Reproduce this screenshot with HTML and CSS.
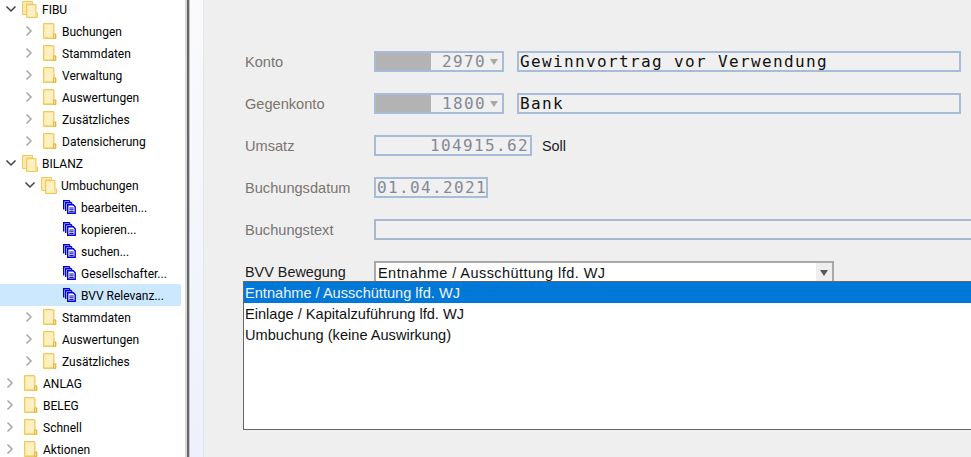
FILE: index.html
```html
<!DOCTYPE html>
<html lang="de">
<head>
<meta charset="utf-8">
<title>BVV Relevanz</title>
<link rel="stylesheet" href="styles.css">
</head>
<body>
<svg class="defs" width="0" height="0" aria-hidden="true">
  <symbol id="closed" viewBox="0 0 14 16">
    <path d="M.5.500h10l.5 .5v10h2v4.500h-12.500z" fill="#fbd978" stroke="#efca62"/>
    <path d="M1.500 1.500h8.500v12.500h-8.500z" fill="#fff0c2"/>
    <path d="M10.500 11h2v4.500h-2z" fill="#fde28e" stroke="#e3b745"/>
  </symbol>
  <symbol id="open" viewBox="0 0 16 17">
    <path d="M.5.5h10v2.500h-6v10.500h-4z" fill="#fde9a8" stroke="#efca62"/>
    <path d="M4.500 3.500h9.500v8.500h1.500v4.500h-11z" fill="#fde28e" stroke="#efca62"/>
    <path d="M5.500 4.500h7.500v11h-7.500z" fill="#fff0c2"/>
  </symbol>
  <symbol id="doc" viewBox="0 0 13 14">
    <path d="M.7 9.500v-8.800h5.500l1 1" fill="none" stroke="#0000e0" stroke-width="1.400"/>
    <path d="M2.700 11v-8.300h5.500l1 1" fill="#fff" stroke="#0000e0" stroke-width="1.400"/>
    <path d="M4.700 4.700h5.500l2 2v6.600h-7.500z" fill="#fff" stroke="#0000e0" stroke-width="1.400"/>
    <path d="M6.300 8h4.400M6.300 9.800h4.400M6.300 11.600h4.400" stroke="#0000a8"/>
  </symbol>
  <symbol id="right" viewBox="0 0 8 12"><path d="M1.500 1.500l4.500 4.500-4.500 4.500" fill="none" stroke="#a6a6a6" stroke-width="1.500"/></symbol>
  <symbol id="down" viewBox="0 0 12 8"><path d="M1.500 1.500l4.500 4.500 4.500-4.500" fill="none" stroke="#404040" stroke-width="1.500"/></symbol>
</svg>

<div class="app">
  <nav class="tree">
    <div class="row l0"><svg class="chev-d"><use href="#down"/></svg><svg class="fold-o"><use href="#open"/></svg><span>FIBU</span></div>
    <div class="row l1"><svg class="chev-r"><use href="#right"/></svg><svg class="fold-c"><use href="#closed"/></svg><span>Buchungen</span></div>
    <div class="row l1"><svg class="chev-r"><use href="#right"/></svg><svg class="fold-c"><use href="#closed"/></svg><span>Stammdaten</span></div>
    <div class="row l1"><svg class="chev-r"><use href="#right"/></svg><svg class="fold-c"><use href="#closed"/></svg><span>Verwaltung</span></div>
    <div class="row l1"><svg class="chev-r"><use href="#right"/></svg><svg class="fold-c"><use href="#closed"/></svg><span>Auswertungen</span></div>
    <div class="row l1"><svg class="chev-r"><use href="#right"/></svg><svg class="fold-c"><use href="#closed"/></svg><span>Zusätzliches</span></div>
    <div class="row l1"><svg class="chev-r"><use href="#right"/></svg><svg class="fold-c"><use href="#closed"/></svg><span>Datensicherung</span></div>
    <div class="row l0"><svg class="chev-d"><use href="#down"/></svg><svg class="fold-o"><use href="#open"/></svg><span>BILANZ</span></div>
    <div class="row l1"><svg class="chev-d"><use href="#down"/></svg><svg class="fold-o"><use href="#open"/></svg><span>Umbuchungen</span></div>
    <div class="row l2"><svg class="doc"><use href="#doc"/></svg><span>bearbeiten...</span></div>
    <div class="row l2"><svg class="doc"><use href="#doc"/></svg><span>kopieren...</span></div>
    <div class="row l2"><svg class="doc"><use href="#doc"/></svg><span>suchen...</span></div>
    <div class="row l2"><svg class="doc"><use href="#doc"/></svg><span>Gesellschafter...</span></div>
    <div class="row l2 selected"><svg class="doc"><use href="#doc"/></svg><span>BVV Relevanz...</span></div>
    <div class="row l1"><svg class="chev-r"><use href="#right"/></svg><svg class="fold-c"><use href="#closed"/></svg><span>Stammdaten</span></div>
    <div class="row l1"><svg class="chev-r"><use href="#right"/></svg><svg class="fold-c"><use href="#closed"/></svg><span>Auswertungen</span></div>
    <div class="row l1"><svg class="chev-r"><use href="#right"/></svg><svg class="fold-c"><use href="#closed"/></svg><span>Zusätzliches</span></div>
    <div class="row l0"><svg class="chev-r"><use href="#right"/></svg><svg class="fold-c"><use href="#closed"/></svg><span>ANLAG</span></div>
    <div class="row l0"><svg class="chev-r"><use href="#right"/></svg><svg class="fold-c"><use href="#closed"/></svg><span>BELEG</span></div>
    <div class="row l0"><svg class="chev-r"><use href="#right"/></svg><svg class="fold-c"><use href="#closed"/></svg><span>Schnell</span></div>
    <div class="row l0"><svg class="chev-r"><use href="#right"/></svg><svg class="fold-c"><use href="#closed"/></svg><span>Aktionen</span></div>
  </nav>
  <div class="splitter"></div>
  <div class="strip"></div>
  <main class="main">
    <form class="form">
      <div class="frow">
        <label class="lbl">Konto</label>
        <div class="field combo"><span class="gray"></span><span class="val">2970</span><span class="arr"></span></div>
        <div class="field name">Gewinnvortrag vor Verwendung</div>
      </div>
      <div class="frow">
        <label class="lbl">Gegenkonto</label>
        <div class="field combo"><span class="gray"></span><span class="val">1800</span><span class="arr"></span></div>
        <div class="field name">Bank</div>
      </div>
      <div class="frow">
        <label class="lbl">Umsatz</label>
        <div class="field amount">104915.62</div>
        <span class="soll">Soll</span>
      </div>
      <div class="frow">
        <label class="lbl">Buchungsdatum</label>
        <div class="field date">01.04.2021</div>
      </div>
      <div class="frow">
        <label class="lbl">Buchungstext</label>
        <div class="field text"></div>
      </div>
      <div class="frow">
        <label class="lbl dark">BVV Bewegung</label>
        <div class="select"><span class="sel-val">Entnahme / Ausschüttung lfd. WJ</span><span class="sel-btn"><i></i></span></div>
      </div>
    </form>
    <ul class="list">
      <li class="on">Entnahme / Ausschüttung lfd. WJ</li>
      <li>Einlage / Kapitalzuführung lfd. WJ</li>
      <li>Umbuchung (keine Auswirkung)</li>
    </ul>
  </main>
</div>
</body>
</html>
```
FILE: styles.css
```css
* { box-sizing: border-box; }
html, body { margin: 0; height: 100%; overflow: hidden; background: #fff; }
.defs { position: absolute; }
.app { display: flex; height: 457px; overflow: hidden; }

.tree {
  width: 185px; flex: none; margin-top: -2px;
  font: 12px/22px Roboto, sans-serif; color: #000;
}
.row { display: flex; align-items: center; height: 22px; width: 181px; white-space: nowrap; }
.row span { position: relative; top: 1px; }
.l0 { padding-left: 6px; }
.l1 { padding-left: 25px; }
.l2 { padding-left: 63px; }
.selected { background: #cce8ff; border-radius: 0 2px 2px 0; }
.chev-r { width: 8px; height: 12px; margin-right: 10px; flex: none; }
.chev-d { width: 12px; height: 8px; margin-left: -1px; margin-right: 5px; flex: none; }
.fold-c { width: 14px; height: 16px; margin-right: 5px; flex: none; }
.fold-o { width: 16px; height: 17px; margin-right: 4px; flex: none; }
.doc { width: 13px; height: 14px; margin-right: 5px; flex: none; }

.splitter {
  width: 5px; flex: none;
  background: linear-gradient(to right, #d8d8d8 0 2px, #666 2px 4px, #c8c8c8 4px);
}
.strip { width: 14px; flex: none; background: linear-gradient(#fafafc, #ecf1fb); border-right: 1px solid #e6e6e6; }

.main { flex: 1; min-width: 0; position: relative; background: #efefef; overflow: hidden; }
.form { display: flex; flex-direction: column; gap: 21px; padding: 51px 0 0 41px; width: 900px; }
.frow { display: flex; align-items: center; height: 21px; }
.lbl { width: 129px; flex: none; font: 14.6px "Liberation Sans", sans-serif; color: #7c7470; }
.lbl.dark { color: #1a1a1a; font-size: 14.4px; }

.field {
  height: 21px; flex: none; border: 2px solid #a6bcd8; background: #f0f0f0;
  display: flex; align-items: center; white-space: nowrap;
  font: 16px "DejaVu Sans Mono", monospace; letter-spacing: 1.37px; color: #838a96;
}
.combo { width: 130px; padding: 0; }
.gray { width: 55px; height: 100%; background: #b3b3b3; flex: none; }
.val { width: 55px; text-align: right; flex: none; }
.arr { margin-left: 4px; width: 0; height: 0; border: 4px solid transparent; border-top: 6px solid #a8a8a8; border-bottom: 0; }
.name { width: 444px; margin-left: 13px; padding-left: 1px; color: #101010; }
.amount { width: 158px; justify-content: flex-end; padding-right: 1px; }
.soll { margin-left: 10px; font: 14.4px "Liberation Sans", sans-serif; color: #1a1a1a; }
.date { width: 114px; padding-left: 1px; }
.text { width: 640px; border-color: #a9b8cc; }

.select {
  width: 460px; height: 21px; flex: none; display: flex; align-items: center;
  border: 2px solid #a9a9a9; border-bottom: 0; background: #fff;
  font: 14.5px "Liberation Sans", sans-serif; letter-spacing: 0.45px; color: #111;
}
.sel-val { flex: 1; padding-left: 2px; white-space: nowrap; overflow: hidden; }
.sel-btn { width: 16px; height: 100%; flex: none; background: #eee; display: flex; align-items: center; justify-content: center; }
.sel-btn i { width: 0; height: 0; border: 4px solid transparent; border-top: 6px solid #555; border-bottom: 0; }

.list {
  position: absolute; left: 39px; top: 281px; width: 800px; height: 149px;
  margin: 0; padding: 0; list-style: none; background: #fff; border: 1px solid #666;
  font: 14.6px/23px "Liberation Sans", sans-serif; color: #111;
}
.list li { height: 21px; padding-left: 1px; }
.list li.on { background: #0078d7; color: #f2f2f2; }
```
